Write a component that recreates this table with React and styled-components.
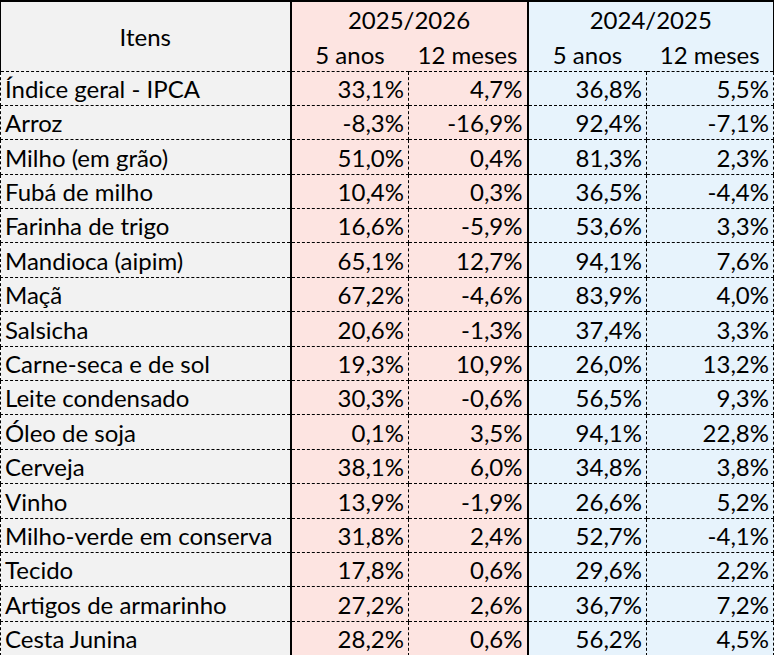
import React from 'react';
import styled, { createGlobalStyle } from 'styled-components';

const GlobalStyle = createGlobalStyle`
  html, body {
    margin: 0;
    padding: 0;
    background: #ffffff;
  }
`;

const PINK = '#fde4e1';
const BLUE = '#e7f3fc';
const GREY = '#f2f2f2';
const DOTS = '1px dashed #000';

const Table = styled.table`
  border-collapse: collapse;
  table-layout: fixed;
  width: 773px;
  font-family: Lato, 'Liberation Sans', sans-serif;
  font-size: 24px;
  color: #000;
`;

const HeadRow = styled.tr`
  height: 35px;
`;

const Row = styled.tr`
  height: 34.4px;
`;

const HeadCell = styled.th`
  font-weight: normal;
  text-align: center;
  vertical-align: middle;
  padding: 0;
  background: ${(p) => p.$bg};
  border-top: 2px solid #000;
  border-left: ${(p) => (p.$thick ? '2px solid #000' : '1px solid #000')};
  border-right: ${(p) => (p.$last ? '1px solid #000' : 'none')};
  border-bottom: ${(p) => (p.$bottom ? DOTS : 'none')};
`;

const SubCell = styled.th`
  font-weight: normal;
  text-align: center;
  vertical-align: bottom;
  padding: 0 0 2px 0;
  background: ${(p) => p.$bg};
  border-left: ${(p) => (p.$thick ? '2px solid #000' : 'none')};
  border-right: ${(p) => (p.$last ? '1px solid #000' : 'none')};
  border-bottom: ${DOTS};
`;

const NameCell = styled.td`
  text-align: left;
  vertical-align: bottom;
  padding: 0 0 2px 4px;
  background: ${GREY};
  border: ${DOTS};
  white-space: nowrap;
`;

const NumCell = styled.td`
  text-align: right;
  vertical-align: bottom;
  padding: 0 4px 2px 0;
  background: ${(p) => p.$bg};
  border-top: ${DOTS};
  border-bottom: ${DOTS};
  border-right: ${DOTS};
  border-left: ${(p) => (p.$thick ? '2px solid #000' : DOTS)};
  white-space: nowrap;
`;

const rows = [
  ['Índice geral - IPCA', '33,1%', '4,7%', '36,8%', '5,5%'],
  ['Arroz', '-8,3%', '-16,9%', '92,4%', '-7,1%'],
  ['Milho (em grão)', '51,0%', '0,4%', '81,3%', '2,3%'],
  ['Fubá de milho', '10,4%', '0,3%', '36,5%', '-4,4%'],
  ['Farinha de trigo', '16,6%', '-5,9%', '53,6%', '3,3%'],
  ['Mandioca (aipim)', '65,1%', '12,7%', '94,1%', '7,6%'],
  ['Maçã', '67,2%', '-4,6%', '83,9%', '4,0%'],
  ['Salsicha', '20,6%', '-1,3%', '37,4%', '3,3%'],
  ['Carne-seca e de sol', '19,3%', '10,9%', '26,0%', '13,2%'],
  ['Leite condensado', '30,3%', '-0,6%', '56,5%', '9,3%'],
  ['Óleo de soja', '0,1%', '3,5%', '94,1%', '22,8%'],
  ['Cerveja', '38,1%', '6,0%', '34,8%', '3,8%'],
  ['Vinho', '13,9%', '-1,9%', '26,6%', '5,2%'],
  ['Milho-verde em conserva', '31,8%', '2,4%', '52,7%', '-4,1%'],
  ['Tecido', '17,8%', '0,6%', '29,6%', '2,2%'],
  ['Artigos de armarinho', '27,2%', '2,6%', '36,7%', '7,2%'],
  ['Cesta Junina', '28,2%', '0,6%', '56,2%', '4,5%'],
];

export default function App() {
  return (
    <>
      <GlobalStyle />
      <Table>
        <colgroup>
          <col style={{ width: 290 }} />
          <col style={{ width: 118 }} />
          <col style={{ width: 119 }} />
          <col style={{ width: 119 }} />
          <col style={{ width: 127 }} />
        </colgroup>
        <thead>
          <HeadRow>
            <HeadCell rowSpan={2} $bg={GREY} $bottom>
              Itens
            </HeadCell>
            <HeadCell colSpan={2} $bg={PINK} $thick>
              2025/2026
            </HeadCell>
            <HeadCell colSpan={2} $bg={BLUE} $thick $last>
              2024/2025
            </HeadCell>
          </HeadRow>
          <HeadRow>
            <SubCell $bg={PINK} $thick>5 anos</SubCell>
            <SubCell $bg={PINK}>12 meses</SubCell>
            <SubCell $bg={BLUE} $thick>5 anos</SubCell>
            <SubCell $bg={BLUE} $last>12 meses</SubCell>
          </HeadRow>
        </thead>
        <tbody>
          {rows.map(([name, a, b, c, d]) => (
            <Row key={name}>
              <NameCell>{name}</NameCell>
              <NumCell $bg={PINK} $thick>{a}</NumCell>
              <NumCell $bg={PINK}>{b}</NumCell>
              <NumCell $bg={BLUE} $thick>{c}</NumCell>
              <NumCell $bg={BLUE}>{d}</NumCell>
            </Row>
          ))}
        </tbody>
      </Table>
    </>
  );
}
